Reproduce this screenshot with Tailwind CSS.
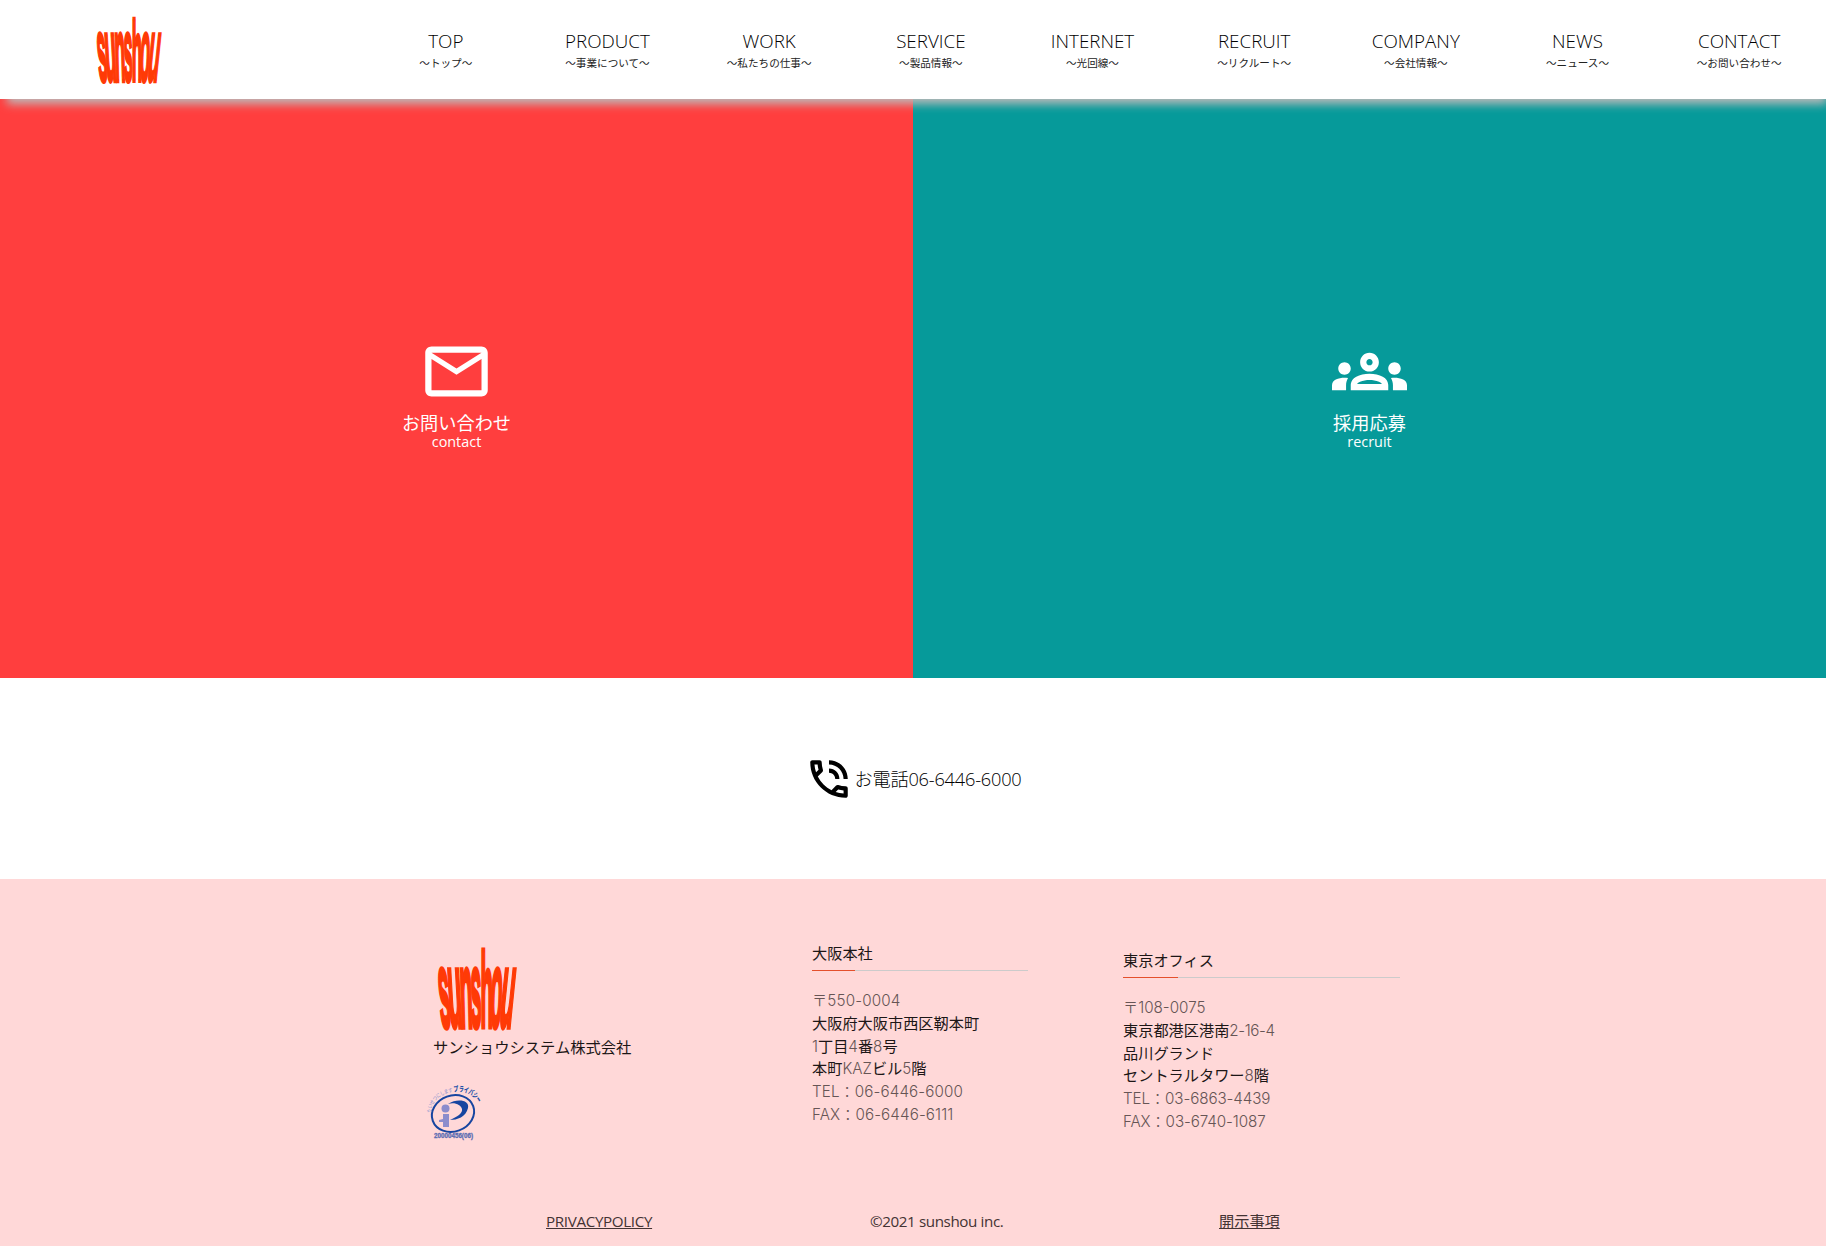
<!DOCTYPE html>
<html lang="ja">
<head>
<meta charset="utf-8">
<title>sunshou</title>
<script src="https://cdn.jsdelivr.net/npm/@tailwindcss/browser@4"></script>
</head>
<body class="w-[1826px] h-[1246px] overflow-hidden bg-white font-['Open_Sans','Noto_Sans_CJK_JP',sans-serif] text-[#222]">
<header class="relative z-10 flex h-[99px] bg-white shadow-[4px_8px_9px_-3px_#bdb9b9]">
  <div class="w-[365px] shrink-0 pl-[95px] pt-[16px]">
    <svg class="h-[67px] w-[67px] overflow-visible" viewBox="0 0 81 82" preserveAspectRatio="none">
      <g font-family="Liberation Sans, sans-serif" font-weight="700" font-size="100" fill="#ff3a06" stroke="#ff3a06" stroke-width="5">
        <text transform="matrix(.2 0 .085 1.08 5 80)">s</text>
        <text transform="matrix(.225 0 .06 1.08 13.500 80)">u</text>
        <text transform="matrix(.21 0 .03 1.08 24.500 80)">n</text>
        <text transform="matrix(.195 0 .015 1.08 35 80)">s</text>
        <text transform="matrix(.205 0 0 1.05 44.5 80)">h</text>
        <text transform="matrix(.195 0 -.04 1.08 53.500 80)">o</text>
        <text transform="matrix(.225 0 -.11 1.08 62 80)">u</text>
      </g>
    </svg>
  </div>
  <nav class="grid w-[1455px] grid-cols-9 pt-[27px] text-center text-black">
    <a><span class="block text-[18.8px] leading-[28px] font-light">TOP</span><span class="block text-[10.6px] leading-[17px] text-[#222]">～トップ～</span></a>
    <a><span class="block text-[18.8px] leading-[28px] font-light">PRODUCT</span><span class="block text-[10.6px] leading-[17px] text-[#222]">～事業について～</span></a>
    <a><span class="block text-[18.8px] leading-[28px] font-light">WORK</span><span class="block text-[10.6px] leading-[17px] text-[#222]">～私たちの仕事～</span></a>
    <a><span class="block text-[18.8px] leading-[28px] font-light">SERVICE</span><span class="block text-[10.6px] leading-[17px] text-[#222]">～製品情報～</span></a>
    <a><span class="block text-[18.8px] leading-[28px] font-light">INTERNET</span><span class="block text-[10.6px] leading-[17px] text-[#222]">～光回線～</span></a>
    <a><span class="block text-[18.8px] leading-[28px] font-light">RECRUIT</span><span class="block text-[10.6px] leading-[17px] text-[#222]">～リクルート～</span></a>
    <a><span class="block text-[18.8px] leading-[28px] font-light">COMPANY</span><span class="block text-[10.6px] leading-[17px] text-[#222]">～会社情報～</span></a>
    <a><span class="block text-[18.8px] leading-[28px] font-light">NEWS</span><span class="block text-[10.6px] leading-[17px] text-[#222]">～ニュース～</span></a>
    <a><span class="block text-[18.8px] leading-[28px] font-light">CONTACT</span><span class="block text-[10.6px] leading-[17px] text-[#222]">～お問い合わせ～</span></a>
  </nav>
</header>

<main>
  <section class="grid h-[579px] grid-cols-2 text-center text-white">
    <a class="flex flex-col items-center bg-[#ff3e3e] pt-[235px]">
      <svg class="size-[75px]" viewBox="0 0 24 24" fill="currentColor"><path d="M22 6c0-1.100-.9-2-2-2H4c-1.100 0-2 .9-2 2v12c0 1.100.9 2 2 2h16c1.100 0 2-.9 2-2V6zm-2 0l-8 5-8-5h16zm0 12H4V8l8 5 8-5v10z"/></svg>
      <span class="mt-[4px] text-[18.2px] leading-[18px] font-['Noto_Sans_CJK_JP',sans-serif]">お問い合わせ</span>
      <span class="mt-px text-[14.4px] leading-5">contact</span>
    </a>
    <a class="flex flex-col items-center bg-[#069a9a] pt-[235px]">
      <svg class="size-[75px]" viewBox="0 0 24 24" fill="currentColor"><path d="M4 13c1.100 0 2-.9 2-2s-.9-2-2-2-2 .9-2 2 .9 2 2 2zm1.130 1.100C4.760 14.040 4.390 14 4 14c-.99 0-1.930.21-2.780.58C.48 14.900 0 15.620 0 16.430V18h4.500v-1.610c0-.83.23-1.610.63-2.290zM20 13c1.100 0 2-.9 2-2s-.9-2-2-2-2 .9-2 2 .9 2 2 2zm4 3.430c0-.81-.48-1.530-1.220-1.850C21.930 14.210 20.990 14 20 14c-.39 0-.76.04-1.130.1.400.68.630 1.460.630 2.290V18H24v-1.570zm-7.760-2.780C15.070 13.130 13.630 12.750 12 12.750s-3.070.39-4.240.9C6.680 14.130 6 15.210 6 16.390V18h12v-1.610c0-1.180-.68-2.260-1.760-2.740zM8.070 16c.09-.23.13-.39.91-.69.97-.38 1.990-.56 3.020-.56s2.050.18 3.020.56c.77.3.81.46.91.69H8.070zM12 8c.55 0 1 .45 1 1s-.45 1-1 1-1-.45-1-1 .45-1 1-1m0-2c-1.660 0-3 1.340-3 3s1.340 3 3 3 3-1.340 3-3-1.340-3-3-3z"/></svg>
      <span class="mt-[4px] text-[18.2px] leading-[18px] font-['Noto_Sans_CJK_JP',sans-serif]">採用応募</span>
      <span class="mt-px text-[14.4px] leading-5">recruit</span>
    </a>
  </section>
  <section class="flex h-[201px] items-center justify-center text-black">
    <svg class="size-[50px]" viewBox="0 0 24 24" fill="currentColor"><path d="M19 12h2c0-4.970-4.030-9-9-9v2c3.870 0 7 3.130 7 7zm-4 0h2c0-2.760-2.240-5-5-5v2c1.660 0 3 1.340 3 3zm5 3.500c-1.250 0-2.450-.2-3.570-.57-.1-.03-.21-.05-.31-.05-.26 0-.51.1-.71.290l-2.200 2.200c-2.830-1.440-5.150-3.750-6.590-6.590l2.200-2.200c.28-.28.36-.67.25-1.020C8.700 6.450 8.500 5.250 8.500 4c0-.55-.45-1-1-1H4c-.55 0-1 .45-1 1 0 9.390 7.610 17 17 17 .55 0 1-.45 1-1v-3.500c0-.55-.45-1-1-1zM5.030 5h1.500c.07.88.22 1.750.46 2.590L5.790 8.800c-.41-1.210-.67-2.480-.76-3.800zM19 18.970c-1.320-.09-2.590-.35-3.800-.75l1.200-1.200c.85.24 1.710.39 2.600.45v1.500z"/></svg>
    <span class="text-[18.2px] leading-6 font-light tracking-[-0.2px]">お電話06-6446-6000</span>
  </section>
</main>

<footer class="flex h-[367px] flex-col justify-between bg-[#ffd8d8] pb-[14px]">
  <div class="flex h-[290px] pl-[427px] pt-[63px] font-['Inter','Noto_Sans_CJK_JP',sans-serif] text-[15.2px] leading-[22.8px] text-[#1c1616]">
    <div class="w-[385px] pt-[5px]">
      <svg class="ml-[9px] h-[82px] w-[81px] overflow-visible" viewBox="0 0 81 82">
        <g font-family="Liberation Sans, sans-serif" font-weight="700" font-size="100" fill="#ff3a06" stroke="#ff3a06" stroke-width="5">
          <text transform="matrix(.2 0 .085 1.08 5 80)">s</text>
          <text transform="matrix(.225 0 .06 1.08 13.500 80)">u</text>
          <text transform="matrix(.21 0 .03 1.08 24.500 80)">n</text>
          <text transform="matrix(.195 0 .015 1.08 35 80)">s</text>
          <text transform="matrix(.205 0 0 1.05 44.5 80)">h</text>
          <text transform="matrix(.195 0 -.04 1.08 53.500 80)">o</text>
          <text transform="matrix(.225 0 -.11 1.08 62 80)">u</text>
        </g>
      </svg>
      <p class="ml-[6px] mt-[8px] text-[15.3px]">サンショウシステム株式会社</p>
      <svg class="mt-[25px] h-[54px] w-[54px] overflow-visible" viewBox="0 0 54 54">
        <path id="arc" d="M4 28 C5 13 18 7 30 6.500 C41 6.500 47 11 51 19" fill="none"/>
        <g font-family="Noto Sans CJK JP, sans-serif">
          <text font-size="5.500" font-weight="500" fill="#9a9bd0"><textPath href="#arc" textLength="33" lengthAdjust="spacingAndGlyphs">たいせつにします</textPath></text>
          <text font-size="7.500" font-weight="900" fill="#2351a8"><textPath href="#arc" startOffset="34" textLength="28" lengthAdjust="spacingAndGlyphs">プライバシー</textPath></text>
        </g>
        <ellipse cx="26" cy="28.500" rx="21.500" ry="18" transform="rotate(-20 26 28.500)" fill="none" stroke="#1745a0" stroke-width="2"/>
        <circle cx="18.500" cy="23.500" r="4" fill="#8c8ccc"/>
        <path d="M16 29h6v13h-6v-5h-4v-2l4-1z" fill="#8c8ccc"/>
        <path d="M21 19C30 13 43 15 41 23C39 32 30 35 23 35C30 32 36 28 35 24C34 20 28 17 21 19z" fill="#1745a0"/>
        <text x="7" y="53" font-family="Liberation Sans, sans-serif" font-size="6.500" font-weight="700" fill="#5a6cb2" stroke="#5a6cb2" stroke-width=".3" textLength="39" lengthAdjust="spacingAndGlyphs">20000456(06)</text>
      </svg>
    </div>
    <div class="w-[216px] pt-px">
      <h2 class="flex h-[28px] flex-col justify-between">大阪本社<span class="h-px w-full shrink-0 bg-[#cccbcb]"><span class="block h-px w-1/5 bg-[#e4502c]"></span></span></h2>
      <p class="mt-[19px]"><span class="font-light tracking-[0.15px] text-[#655]">〒550-0004</span><br>大阪府大阪市西区靭本町<br><span class="font-light text-[#655]">1</span>丁目<span class="font-light text-[#655]">4</span>番<span class="font-light text-[#655]">8</span>号<br>本町<span class="font-light text-[#655]">KAZ</span>ビル<span class="font-light text-[#655]">5</span>階<br><span class="font-light tracking-[0.1px] text-[#655]">TEL：06-6446-6000<br>FAX：06-6446-6111</span></p>
    </div>
    <div class="ml-[95px] w-[277px] pt-[8px]">
      <h2 class="flex h-[28px] flex-col justify-between">東京オフィス<span class="h-px w-full shrink-0 bg-[#cccbcb]"><span class="block h-px w-1/5 bg-[#e4502c]"></span></span></h2>
      <p class="mt-[19px]"><span class="font-light text-[#655]">〒108-0075</span><br>東京都港区港南<span class="font-light tracking-[-0.4px] text-[#655]">2-16-4</span><br>品川グランド<br>セントラルタワー<span class="font-light text-[#655]">8</span>階<br><span class="font-light tracking-[-0.1px] text-[#655]">TEL：03-6863-4439<br>FAX：03-6740-1087</span></p>
    </div>
  </div>
  <div class="flex pl-[546px] text-[15.2px] leading-[22px] text-[#433]">
    <a class="w-[324px] tracking-[-0.35px] underline">PRIVACYPOLICY</a>
    <span class="w-[349px] tracking-[-0.4px]">©2021 sunshou inc.</span>
    <a class="underline">開示事項</a>
  </div>
</footer>
</body>
</html>
